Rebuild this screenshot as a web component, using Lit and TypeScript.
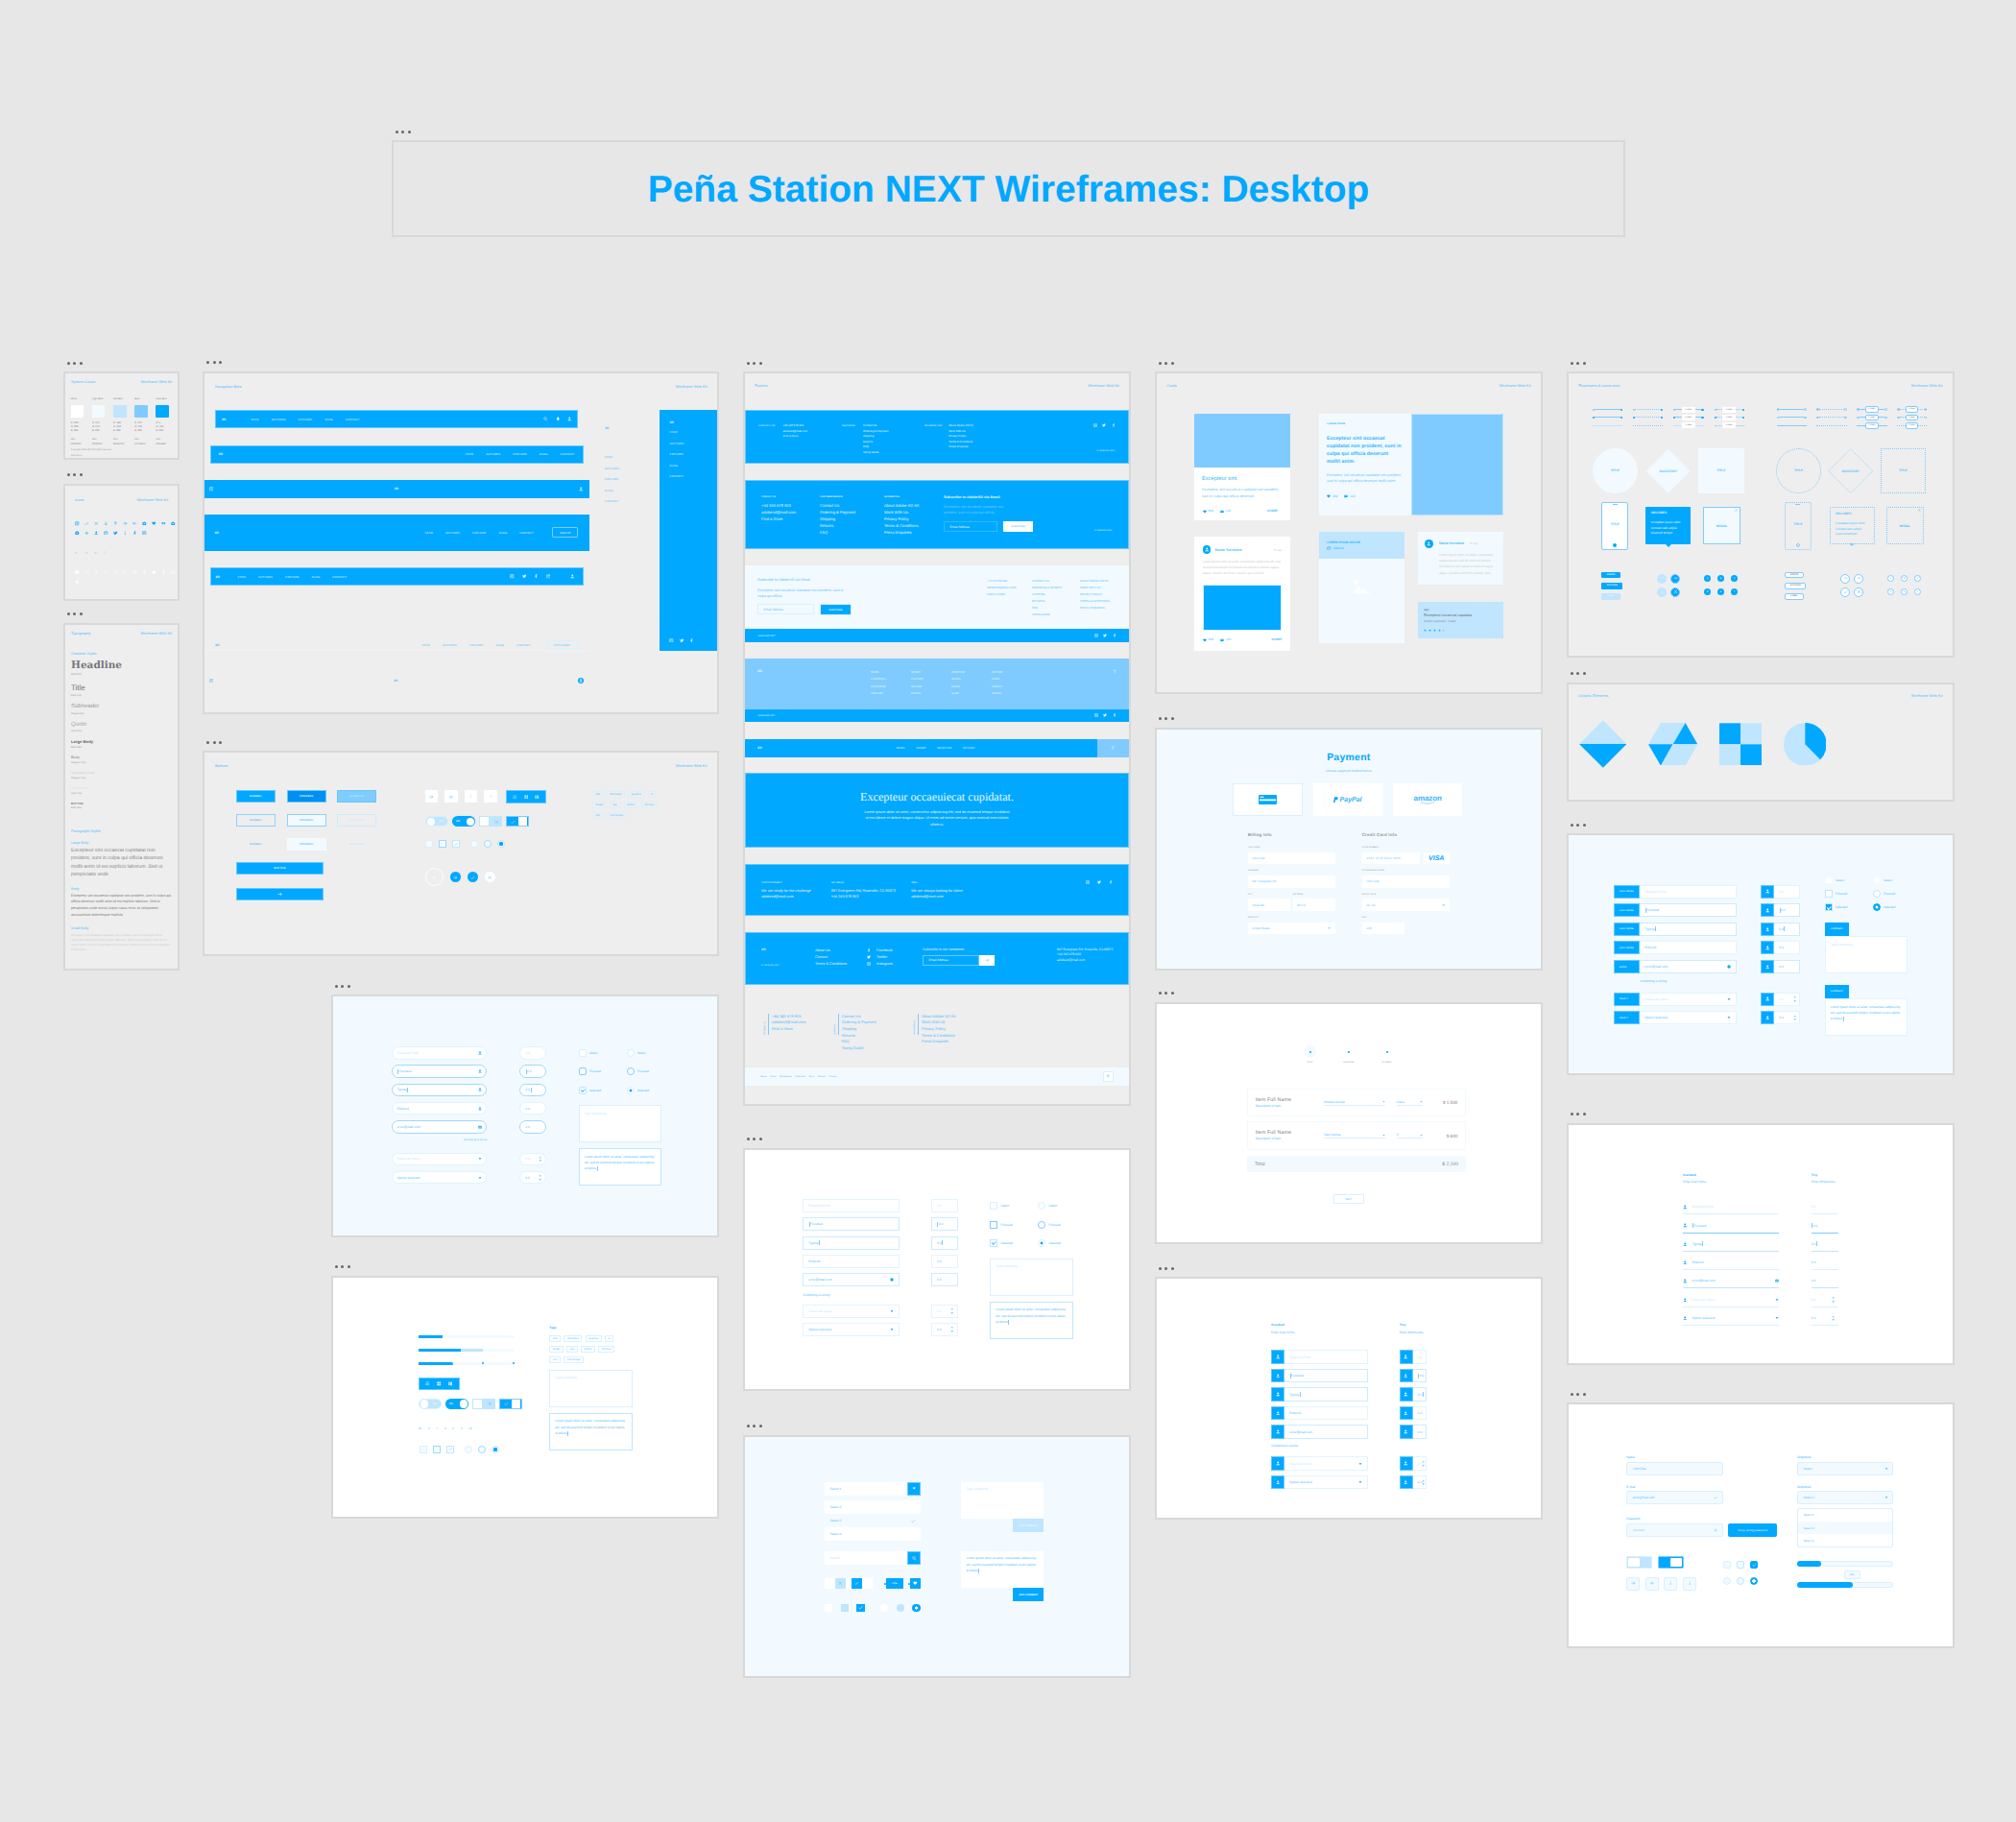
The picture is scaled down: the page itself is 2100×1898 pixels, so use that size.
import { LitElement, html, css, svg, nothing } from "lit";
import { customElement } from "lit/decorators.js";

const F = (d: string) => svg`<path d=${d} fill-rule="evenodd"/>`;
const S = (d: string) => svg`<path d=${d} fill="none" stroke="currentColor" stroke-width="2.6"/>`;
const ICONS: Record<string, any> = {
  user: F("M12 2a5 5 0 1 1 0 10 5 5 0 0 1 0-10zM4 19c0-5 16-5 16 0zM2 20.500h20V23H2z"),
  search: S("M10 3a7 7 0 1 1 0 14 7 7 0 0 1 0-14zM15 15l7 7"),
  bell: F("M12 2c4 0 6 3 6 7v5l3 4H3l3-4V9c0-4 2-7 6-7zM9.500 19.500h5a2.500 2.500 0 0 1-5 0z"),
  heart: F("M12 21 3 12C0 8 3 3 7 3c2 0 4 1 5 3 1-2 3-3 5-3 4 0 7 5 4 9z"),
  camera: F("M2 6h6l2-3h4l2 3h6v15H2zM12 9a4 4 0 1 0 0 8 4 4 0 0 0 0-8z"),
  comment: F("M2 4h20v14H8l-5 4v-4H2zM6 10v2h12v-2z"),
  tw: F("M23 5c-.8.4-1.700.6-2.600.7 1-.6 1.700-1.500 2-2.600-.9.5-1.900.9-2.900 1.100a4.600 4.600 0 0 0-7.800 4.200C8 8.200 4.600 6.400 2.300 3.600c-1.200 2.100-.6 4.800 1.400 6.100-.7 0-1.400-.2-2-.6 0 2.200 1.500 4.100 3.700 4.600-.7.2-1.400.2-2.100.1.600 1.900 2.300 3.200 4.300 3.200A9.200 9.200 0 0 1 1 18.900 13 13 0 0 0 21 7.500c.9-.6 1.600-1.400 2-2.500z"),
  fb: F("M14 23v-10h3.500l.5-4h-4V7c0-1 .5-2 2-2h2V1.500C17 1.300 16 1.200 15 1.200c-3 0-5 1.800-5 5V9H6.500v4H10v10z"),
  ig: S("M3 3h18v18H3zM12 7.500a4.500 4.500 0 1 1 0 9 4.500 4.500 0 0 1 0-9z"),
  globe: S("M12 2a10 10 0 1 1 0 20 10 10 0 0 1 0-20zM3 9c6 1 12-1 15-5M5 19c3-7 9-11 16-9"),
  gear: F("M10 1h4l.6 3 2.400 1 2.600-1.700 2.800 2.800L20 8.700l1 2.300 3 .6v3l-3 .6-1 2.400 1.700 2.600-2.800 2.800-2.600-1.700-2.300 1-.6 3h-4l-.6-3-2.400-1-2.600 1.700-2.800-2.800L4 17.600 3 15.300 0 14.700v-3l3-.6 1-2.400-1.700-2.600 2.800-2.800L7.700 5l2.300-1zM12 9a4 4 0 1 0 0 8 4 4 0 0 0 0-8z"),
  x: S("M4 4l16 16M20 4L4 20"),
  check: S("M3 13l6 6L21 6"),
  plus: S("M12 2v20M2 12h20"),
  up: S("M12 22V3M4 11l8-8 8 8"),
  down: S("M12 2v19M4 13l8 8 8-8"),
  right: S("M2 12h19M13 4l8 8-8 8"),
  left: S("M22 12H3M11 4l-8 8 8 8"),
  tri: F("M3 8h18l-9 10z"),
  triup: F("M3 16h18L12 6z"),
  menu: S("M2 5h20M2 12h20M2 19h20"),
  doc: S("M3 3h18v18H3zM7 9h10M7 14h10"),
  grid: F("M2 2h9v9H2zM13 2h9v9h-9zM2 13h9v9H2zM13 13h9v9h-9z"),
  cols: F("M2 2h5v20H2zM9.500 2h5v20h-5zM17 2h5v20h-5z"),
  quote: F("M2 6h9v7c0 3-2 5-5 6v-4c1 0 2-1 2-2H2zM13 6h9v7c0 3-2 5-5 6v-4c1 0 2-1 2-2h-6z"),
  dots: F("M10 3h4v4h-4zM10 10h4v4h-4zM10 17h4v4h-4z"),
  play: F("M8 5l11 7-11 7z"),
  mail: S("M2 5h20v14H2zM2 6l10 7 10-7"),
  mount: F("M1 20l7-10 4 5 3-3 8 8zM5 3a2.500 2.500 0 1 1 0 5 2.500 2.500 0 0 1 0-5z"),
  dot: F("M12 2a10 10 0 1 1 0 20 10 10 0 0 1 0-20z"),
  star: F("M12 2l3 7 7 .7-5.300 4.700 1.600 7.100L12 18l-6.300 3.500 1.600-7.100L2 9.700 9 9z"),
};
const ic = (n: string, c = "") =>
  html`<svg class="i ${c}" viewBox="0 0 24 24" aria-hidden="true">${ICONS[n]}</svg>`;

const art = (x: number, y: number, w: number, h: number, cls: string, body: unknown) => html`
  <section class="art" style="left:${x}px;top:${y - 14}px;width:${w}px">
    <div class="dots"><i></i><i></i><i></i></div>
    <div class="board ${cls}" style="height:${h}px">${body}</div>
  </section>`;

const hd = (t: string, c = "") =>
  html`<div class="hd ${c}"><span>${t}</span><span>Wireframe Web Kit</span></div>`;

const LINKS = ["FEED", "AUTHORS", "EXPLORE", "BLOG", "CONTACT"];
const links = () => html`<div class="links">${LINKS.map((l) => html`<span>${l}</span>`)}</div>`;
const stack = (rows: [string, string, number][]) =>
  rows.map(([t, c, m]) => html`<div class=${c} style="margin-top:${m}px">${t}</div>`);
const lines = (c: string, arr: string[]) => html`<div class=${c}>${arr.map((t) => html`<div>${t}</div>`)}</div>`;
const social = () => html`<div class="soc">${ic("ig")}${ic("tw")}${ic("fb")}</div>`;

/* ---------- system colours ---------- */
const SW = [
  ["White", "#ffffff", "255", "255", "255", "#FFFFFF"],
  ["Light Blue", "#f2faff", "242", "249", "255", "#F2F9FF"],
  ["Mid Blue", "#bfe5ff", "188", "228", "255", "#BCE4FF"],
  ["Blue", "#7fcbff", "127", "203", "255", "#7FCBFF"],
  ["Dark Blue", "#00a8ff", "0", "168", "255", "#00A8FF"],
];
const colors = () => html`${hd("System Colors")}
  <div class="swgrid">
    ${SW.map((s) => html`<div>
      <div class="swl">${s[0]}</div>
      <div class="sw" style="background:${s[1]}"></div>
      <div class="swv"><div>R: ${s[2]}</div><div>G: ${s[3]}</div><div>B: ${s[4]}</div></div>
      <div class="swh"><div>Hex</div><div>${s[5]}</div></div>
    </div>`)}
  </div>
  <div class="swc">Copyright 2016-2017 All rights reserved</div>
  <div class="swc swc2">Web kit 2.1</div>`;

/* ---------- icons ---------- */
const icons = () => html`${hd("Icons", "hd-i")}
  <div class="igrid ig1">${["doc","check","x","down","up","right","left","camera","heart","quote","camera","gear","plus","user","globe","tw","dots","fb","ig"].map((n) => ic(n))}</div>
  <div class="igrid ig2">${["left","right","left","dots"].map((n) => ic(n, "sm"))}</div>
  <div class="igrid ig3">${["comment","x","down","up","right","left","globe","user","tw","fb","mail","bell"].map((n) => ic(n))}</div>`;

/* ---------- typography ---------- */
const typo = () => html`${hd("Typography")}
  ${stack([
    ["Character Styles", "t-h", 17],
    ["Headline", "t-head", 3.5],
    ["Bold 24pt", "t-m", 2],
    ["Title", "t-title", 7],
    ["Bold 14pt", "t-m", 1],
    ["Subheader", "t-sub", 5],
    ["Regular 8pt", "t-m", 1.5],
    ["Quote", "t-q", 5.5],
    ["Italic 37pt", "t-m", 1],
    ["Large Body", "t-lb", 5.5],
    ["Bold 18pt", "t-m", 2],
    ["Body", "t-b", 5.8],
    ["Regular 14pt", "t-m", 1.8],
    ["Secondary Body", "t-sb", 5.5],
    ["Regular 14pt", "t-m", 1.5],
    ["Placeholder", "t-ph", 5.5],
    ["Italic 14pt", "t-m", 1],
    ["BUTTON", "t-btn", 6],
    ["Bold 12pt", "t-m", 0.5],
    ["Paragraph Styles", "t-h t-h2", 18.5],
    ["Large Body", "t-h", 8],
    ["Excepteur sint occaecat cupidatat non proident, sunt in culpa qui officia deserunt mollit anim id est explicio laborum. Sed ut perspiciatis unde", "p-l", 1.2],
    ["Body", "t-h", 7.8],
    ["Excepteur sint occaecat cupidatat non proident, sunt in culpa qui officia deserunt mollit anim id est explicio laborum. Sed ut perspiciatis unde omnis istpon natus error sit voluptatem accusantium doloremque explicia", "p-b", 1.2],
    ["Small Body", "t-h", 8.9],
    ["Excepteur sint occaecat cupidatat non proident, sunt in culpa qui officia deserunt mollit anim id est explicio laborum. Sed ut perspiciatis unde omnis istpon natus error sit voluptatem accusantium doloremque explicia laudantium. Dolore eum", "p-s", 2],
  ])}`;

/* ---------- navigation ---------- */
const nav = () => html`${hd("Navigation Bars", "hd-n")}
  <div class="nb">
    <div class="nl">
      <div class="bar b1"><b class="xd">XD</b>${links()}<div class="ics">${ic("search")}${ic("bell")}${ic("user")}</div></div>
      <div class="bar b2"><b class="xd">XD</b>${links()}</div>
      <div class="bar b3">${ic("doc")}<b class="xd">XD</b>${ic("user")}</div>
      <div class="bar b4"><b class="xd">XD</b>${links()}<span class="signup">SIGN UP</span></div>
      <div class="bar b5"><b class="xd">XD</b>${links()}<div class="ics">${ic("ig")}${ic("tw")}${ic("fb")}${ic("globe")}</div>${ic("user", "uu")}</div>
      <div class="bar b6"><b class="xd">XD</b>${links()}<span class="start">LET'S START</span></div>
      <div class="bar b7">${ic("doc")}<b class="xd">XD</b><span class="uc">${ic("user")}</span></div>
    </div>
    <div class="mn"><b class="xd">XD</b><div class="mnl">${LINKS.map((l) => html`<div>${l}</div>`)}</div></div>
    <div class="side"><b class="xd">XD</b><div class="sdl">${LINKS.map((l) => html`<div>${l}</div>`)}</div><div class="ics">${ic("ig")}${ic("tw")}${ic("fb")}</div></div>
  </div>`;

/* ---------- buttons ---------- */
const TAGS = ["web", "illustration", "graphics", "ui", "design", "app", "iphone", "interface", "icon", "web design"];
const tags = () => html`<div class="tags">${TAGS.map((t) => html`<span>${t}</span>`)}</div>`;
const seg = () => html`<div class="seg">${ic("menu")}${ic("grid")}${ic("cols")}</div>`;
const toggles = () => html`
  <div class="tg off"><i></i><span>OFF</span></div>
  <div class="tg on"><span>ON</span><i></i></div>
  <div class="tq off"><i></i>${ic("x")}</div>
  <div class="tq on">${ic("check")}<i></i></div>`;
const checks = () => html`<div class="chs">
    <i class="ck"></i><i class="ck fo"></i><i class="ck se">${ic("check")}</i>
    <i class="ra first"></i><i class="ra fo"></i><i class="ra se"></i>
  </div>`;
const btn = (t: string, c: string) => html`<span class="btn ${c}">${t}</span>`;
const buttons = () => html`${hd("Buttons", "hd-n hd-bt")}
  <div class="bb">
    <div class="bc1">
      <div class="bgrid">
        ${btn("NORMAL", "fill")}${btn("PRESSED", "fill pr")}${btn("DISABLED", "fill dis")}
        ${btn("NORMAL", "ol")}${btn("PRESSED", "ol pr")}${btn("DISABLED", "ol dis")}
        ${btn("NORMAL", "tn")}${btn("PRESSED", "tn pr")}${btn("DISABLED", "tn dis")}
      </div>
      <span class="btn fill wide">BUTTON</span>
      <span class="btn fill wide wide2">${ic("right")}</span>
    </div>
    <div class="bc2">
      <div class="brow r1">
        <span class="sq">${ic("right")}</span><span class="sq">${ic("left")}</span><span class="sq">${ic("dots", "tiny")}</span><span class="sq">${ic("dots", "tiny")}</span>${seg()}
      </div>
      <div class="brow r2">${toggles()}</div>
      ${checks()}
      <div class="brow r4">
        <span class="cbig">${ic("play")}</span><span class="cb">${ic("right")}</span><span class="cb">${ic("check")}</span><span class="cb w">${ic("x")}</span>
      </div>
    </div>
    ${tags()}
  </div>`;

/* ---------- footers ---------- */
const footers = () => {
  const c1 = ["+44 345 678 903", "adobexd@mail.com", "Find a Store"];
  const c2 = ["Contact Us", "Ordering & Payment", "Shipping", "Returns", "FAQ", "Sizing Guide"];
  const c3 = ["About Adobe XD Kit", "Work With Us", "Privacy Policy", "Terms & Conditions", "Press Enquiries"];
  const up = (s: string[]) => s.map((v) => v.toUpperCase());
  const news = [["NEWS", "CHANNELS", "OVERVIEW", "TIMELINE"], ["SPORT", "CULTURE", "NATURE", "BOOKS"], ["WEATHER", "AUTOS", "LOCAL", "SHOP"], ["FUTURE", "FOOD", "HEALTH", "TRAVEL"]];
  return html`${hd("Footers", "hd-f")}
  <div class="ff f1">
    <div class="g g1"><span>CONTACT US</span>${lines("ls", c1)}</div>
    <div class="g g2"><span>SERVICES</span>${lines("ls", c2)}</div>
    <div class="g"><span>INFORMATION</span>${lines("ls", c3)}</div>
    <div class="fr">${social()}<span class="cpy">© AdobeXD 2017</span></div>
  </div>
  <div class="ff f2">
    <div class="g k1"><span>CONTACT US</span>${lines("ls", c1)}</div>
    <div class="g k2"><span>CUSTOMER SERVICE</span>${lines("ls", c2.slice(0, 5))}</div>
    <div class="g k3"><span>INFORMATION</span>${lines("ls", c3)}</div>
    <div class="sb">
      <b>Subscribe to AdobeXD via Email</b>
      <p>Excepteur sint occaecat cupidatat non proident, sunt in culpa qui officia</p>
      <div class="sbr"><span class="in">Email Address</span><span class="go">SUBSCRIBE</span></div>
    </div>
    <span class="cpy">© AdobeXD 2017</span>
  </div>
  <div class="ff f3">
    <div class="sb">
      <b>Subscribe to AdobeXD via Email</b>
      <p>Excepteur sint occaecat cupidatat non proident, sunt in culpa qui officia</p>
      <div class="sbr"><span class="in">Email Address</span><span class="go">SUBSCRIBE</span></div>
    </div>
    ${lines("ls c1b", up(c1))}${lines("ls c2b", up(c2))}${lines("ls", up(c3))}
  </div>
  <div class="strip"><span>©AdobeXD 2017</span>${social()}</div>
  <div class="ff f4 ">
    <b class="xd">XD</b>
    ${news.map((n) => lines("ls nw", n))}
    ${ic("up")}
  </div>
  <div class="strip"><span>©AdobeXD 2017</span>${social()}</div>
  <div class="ff f5"><b class="xd">XD</b><div class="links">${news.map((n) => html`<span>${n[0]}</span>`)}</div><span class="upb">${ic("up")}</span></div>
  <div class="ff f6">
    <h3>Excepteur occaeuiecat cupidatat.</h3>
    <p>Lorem ipsum dolor sit amet, consectetur adipisicing elit, sed do eiusmod tempor incididunt ut ero labore et dolore magna aliqua. Ut enim ad minim veniam, quis nostrud exercitation ullamco.</p>
  </div>
  <div class="ff f7">
    <div class="ct w1"><span>START A PROJECT</span><div>We are ready for the challenge</div><div>adobexd@mail.com</div></div>
    <div class="ct w2"><span>SAY HELLO</span><div>697 Evergreen Rd, Roseville, CA 95673</div><div>+44 345 678 903</div></div>
    <div class="ct"><span>JOBS</span><div>We are always looking for talent</div><div>adobexd@mail.com</div></div>
    ${social()}
  </div>
  <div class="ff f8">
    <div class="n1"><b class="xd">XD</b><span class="cpy">© AdobeXD 2017</span></div>
    ${lines("ls n2", ["About Us", "Contact", "Terms & Conditions"])}
    <div class="n3">
      <div>${ic("fb")}Facebook</div><div>${ic("tw")}Twitter</div><div>${ic("ig")}Instagram</div>
    </div>
    <div class="n4"><span>Subscribe to our newsletter</span><div class="sbr"><span class="in">Email Address</span><span class="go">${ic("right")}</span></div></div>
    ${lines("ls n5", ["697 Evergreen Rd, Roseville, CA 95673", "+44 345 678 903", "adobexd@mail.com"])}
  </div>
  <div class="f9">
    <div class="lk w1"><span>CONTACT US</span>${lines("ls", c1)}</div>
    <div class="lk w2"><span>SERVICES</span>${lines("ls", c2)}</div>
    <div class="lk"><span>INFORMATION</span>${lines("ls", c3)}</div>
  </div>
  <div class="f10"><div class="fl">${["About", "Press", "Developers", "Channels", "Sport", "Culture", "Privacy"].map((t) => html`<span>${t}</span>`)}</div><span class="upc">${ic("up")}</span></div>`;
};

/* ---------- cards ---------- */
const stats = (share = true) => html`<div class="stat"><span>${ic("heart")}809</span><span>${ic("comment")}120</span>${share ? html`<b>SHARE</b>` : nothing}</div>`;
const cards = () => html`${hd("Cards", "hd-f")}
  <div class="cw">
    <div class="cc1">
      <article class="cd c-a">
        <div class="img"></div>
        <h4>Excepteur sint.</h4>
        <p>Excepteur sint occaecat cupidatat non proident, sunt in culpa qui officia deserunt</p>
        ${stats()}
      </article>
      <article class="cd c-b">
        <div class="who"><span class="av">${ic("user")}</span><b>Name Surname</b><em>5h ago</em></div>
        <p>Lorem ipsum dolor sit amet, consectetur adipiscing elit, sed do eiusmod tempor tincididunt ore labore et dolore magna aliqua. Ut enim ad minim veniam, quis nostrud</p>
        <div class="pic"></div>
        ${stats()}
      </article>
    </div>
    <div class="cc2">
      <div class="c-c">
        <div class="cct">
          <span class="eb">LOREM IPSUM</span>
          <h4>Excepteur sint occaecat cupidatat non proident, sunt in culpa qui officia deserunt mollit anim.</h4>
          <p>Excepteur sint occaecat cupidatat non proident, sunt in culpa qui officia deserunt mollit anim.</p>
          ${stats(false)}
        </div>
        <div class="img2"></div>
      </div>
      <div class="c-row">
        <article class="c-d">
          <div class="cdh"><b>LOREM IPSUM DOLOR</b><span>${ic("globe")}website</span></div>
          <div class="cdi">${ic("mount")}</div>
        </article>
        <div class="c-col">
          <article class="c-e">
            <span class="av">${ic("user")}</span>
            <div><div class="nm"><b>Name Surname</b><em>5h ago</em></div><p>Lorem ipsum dolor sit amet, consectetur adipiscing elit, sed do eiusmod tempor incididunt ut ero labore et dolore magna aliqua. Ut enim ad minim veniam, quis</p></div>
          </article>
          <article class="c-f">
            <span>App</span><b>Excepteur occaecat cupidata</b><em>Kristin Francisco, Travel</em>
            <div class="stars">${ic("star")}${ic("star")}${ic("star")}${ic("star")}${ic("star", "o")}</div>
          </article>
        </div>
      </div>
    </div>
  </div>`;

/* ---------- payment ---------- */
const pf = (l: string, t: string, c = "", tail: unknown = nothing) => html`<div class="pf ${c}"><label>${l}</label><div class="pi">${t}${tail}</div></div>`;
const payment = () => html`
  <h2 class="pt">Payment</h2>
  <div class="ps">Choose payment method below</div>
  <div class="opts">
    <div class="opt sel"><svg class="cardi" viewBox="0 0 38 20"><rect width="38" height="20" rx="2" fill="#00a8ff"/><rect x="2" y="9" width="34" height="3.500" fill="#fff"/><rect x="3" y="3" width="8" height="3" fill="#bfe5ff"/></svg></div>
    <div class="opt pp"><svg class="ppi" viewBox="0 0 10 12"><path d="M2 0h5c2 0 3 2 2 4S7 6 5 6H4l-1 6H0z" fill="#00a8ff"/></svg><i>PayPal</i></div>
    <div class="opt az"><span>amazon</span><svg class="smile" viewBox="0 0 30 4"><path d="M5 0c6 4 14 4 20 0" fill="none" stroke="#7fcbff" stroke-width="1"/></svg></div>
  </div>
  <div class="pcols">
    <div class="pcol">
      <h5>Billing Info</h5>
      ${pf("FULL NAME", "John Doe")}
      ${pf("ADDRESS", "697 Evergreen Rd.")}
      <div class="prow">${pf("CITY", "Roseville", "half")}${pf("ZIP CODE", "95673", "half")}</div>
      ${pf("COUNTRY", "United States", "", ic("tri"))}
    </div>
    <div class="pcol">
      <h5>Credit Card Info</h5>
      <div class="pf"><label>CARD NUMBER</label><div class="prow p2"><div class="pi cn">1234 5678 3456 2456</div><div class="pi visa">VISA</div></div></div>
      ${pf("CARDHOLDER NAME", "John Doe")}
      ${pf("EXPIRY DATE", "06 / 21", "", ic("tri"))}
      ${pf("CVV", "123", "half")}
    </div>
  </div>`;

/* ---------- flowcharts ---------- */
const cline = (lbl: boolean, dsh: boolean, ends: number) => html`<div class="cl ${dsh ? "da" : ""} e${ends}">
    <i class="e"></i><i class="li"></i>${lbl ? html`<span>LABEL</span><i class="li"></i>` : nothing}<i class="e r"></i>
  </div>`;
const lg = (lbl: boolean, dsh: boolean) => html`<div class="lg">${[0, 1, 2].map((e) => cline(lbl, dsh, e))}</div>`;
const side = (c: string) => html`<div class="fside ${c}">
    <div class="lrow">${lg(false, false)}${lg(false, true)}${lg(true, false)}${lg(true, true)}</div>
    <div class="srow">
      <div class="sh ci">TITLE</div>
      <svg class="dia" viewBox="0 0 48 48"><polygon points="24,.6 47.4,24 24,47.400 .6,24"/><text x="24" y="25.200" text-anchor="middle">SUCCESS?</text></svg>
      <div class="sh sq2">TITLE</div>
    </div>
    <div class="prw">
      <div class="phn"><i class="sp"></i>TITLE<i class="hb"></i></div>
      <div class="call"><b>INCLUDES</b><span>Excepteur ipsum dolor</span><span>Contate labo adipisi</span><span>Eiusmod tempor</span></div>
      <div class="modal">MODAL${ic("x")}</div>
    </div>
    <div class="trw">
      <div class="pills"><span>ERROR</span><span class="l">SUCCESS</span><span>LABEL</span></div>
      <div class="yn"><span class="a">YES</span><span class="b">NO</span><span class="a">${ic("check")}</span><span class="b">${ic("x")}</span></div>
      <div class="nums">${["A", "B", "C", "D", "E", "F"].map((t) => html`<span>${t}</span>`)}</div>
    </div>
  </div>`;
const flow = () => html`${hd("Flowcharts & connectors", "hd-f")}<div class="fbody">${side("sol")}${side("dsh")}</div>`;

/* ---------- graphic ---------- */
const graphic = () => html`${hd("Graphic Elements", "hd-f")}
  <div class="gfx">
    <svg class="g1x" viewBox="0 0 50 50"><polygon points="25,0 50,25 0,25" fill="#bfe5ff"/><polygon points="0,25 50,25 25,50" fill="#00a8ff"/></svg>
    <svg class="g2x" viewBox="0 0 154 134"><polygon points="0,67 39,0 116,0 77,67" fill="#bfe5ff"/><polygon points="77,67 116,0 154,67" fill="#00a8ff"/><polygon points="0,67 77,67 39,134" fill="#00a8ff"/><polygon points="77,67 154,67 116,134 39,134" fill="#bfe5ff"/></svg>
    <svg class="g3x" viewBox="0 0 2 2"><rect width="1" height="1" fill="#00a8ff"/><rect x="1" width="1" height="1" fill="#bfe5ff"/><rect y="1" width="1" height="1" fill="#bfe5ff"/><rect x="1" y="1" width="1" height="1" fill="#00a8ff"/></svg>
    <svg class="g4x" viewBox="0 0 134 134"><circle cx="67" cy="67" r="67" fill="#bfe5ff"/><path d="M67 67V0A67 67 0 0 1 114.400 114.400z" fill="#00a8ff"/></svg>
  </div>`;

/* ---------- forms ---------- */
type V = "n" | "p" | "k" | "s" | "l";
const FIELDS: [string, string][] = [["Required Field", "ph"], ["Focused", "fo"], ["Typing", "ty"], ["Entered", "en"], ["error@mail.com", "er"]];
const fld = (v: V, t: string, st: string, sel: boolean, small: boolean) => {
  const lead =
    v === "k" && !small ? html`<span class="lb">${st === "er" ? "EMAIL" : sel ? "WHAT?" : "FULL NAME"}</span>`
    : v === "k" || v === "s" ? html`<span class="ib">${ic("user")}</span>`
    : v === "l" && !small ? ic("user", "lead")
    : nothing;
  const trail =
    small && sel ? html`<span class="spin">${ic("triup")}${ic("tri")}</span>`
    : sel ? ic("tri", "tr")
    : small ? nothing
    : v === "n" ? ic(st === "er" ? "camera" : "user", "tr")
    : st === "er" && v !== "s" ? ic(v === "l" ? "camera" : "dot", "tr")
    : nothing;
  return html`<div class="f ${st}">${lead}<span class="tx">${st === "fo" ? html`<i class="car"></i>` : nothing}${t}${st === "ty" ? html`<i class="car"></i>` : nothing}</span>${trail}</div>`;
};
const ta = (t: string, fo: boolean) => html`<div class="ta ${fo ? "tf" : "tp"}">${t}${fo ? html`<i class="car"></i>` : nothing}</div>`;
const LOREM = "Lorem ipsum dolor sit amet, consectetur adipisicing elit, sed do eiusmod tempor incididunt ut ero labore et dolore";
const chkg = () => html`<div class="cg">
    ${["Select", "Focused", "Selected"].map((t, i) => html`
      <div class="ci2 s${i}"><i class="ck"></i><span>${t}</span></div>
      <div class="ci2 s${i}"><i class="ra"></i><span>${t}</span></div>`)}
  </div>`;
const form = (v: V, heads: boolean, third: unknown) => {
  const note = (on: boolean) => (v === "l" ? nothing : html`<div class="note">${on ? "Something is wrong" : ""}</div>`);
  return html`<div class="fm v-${v}">
    <div class="c1">
      ${heads ? html`<div class="fh"><b>Standard</b><span>Enter main forms</span></div>` : nothing}
      <div class="fs">
        ${FIELDS.map(([t, s]) => fld(v, t, s, false, false))}
        ${note(true)}
        ${fld(v, "Select an option", "ph", true, false)}${fld(v, "Option selected", "en", true, false)}
      </div>
    </div>
    <div class="c2">
      ${heads ? html`<div class="fh"><b>Tiny</b><span>Enter dimensions</span></div>` : nothing}
      <div class="fs">
        ${FIELDS.map(([, s]) => fld(v, "0.0", s, false, true))}
        ${note(false)}
        ${fld(v, "0.0", "ph", true, true)}${fld(v, "0.0", "en", true, true)}
      </div>
    </div>
    ${third}
  </div>`;
};
const third = () => html`<div class="c3">${chkg()}${ta("Type something ...", false)}${ta(LOREM, true)}</div>`;
const thirdK = () => html`<div class="c3">${chkg()}
    <span class="lbb">COMMENT</span>${ta("Type something ...", false)}
    <span class="lbb second">COMMENT</span>${ta(LOREM, true)}
  </div>`;

/* ---------- controls ---------- */
const controls = () => html`<div class="oo">
    <div class="o1">
      <div class="pg"><i class="a25"></i></div>
      <div class="pg"><i class="mid"></i><i class="a44"></i></div>
      <div class="pg dotsb"><i class="a34"></i><u class="k"></u><u class="d1"></u><u class="d2"></u></div>
      ${seg()}
      <div class="brow r2 o-t">${toggles()}</div>
      <div class="pager">${ic("left")}<i></i><i></i><i></i><i></i><i></i>${ic("right")}</div>
      ${checks()}
    </div>
    <div class="o2">
      <b class="ttl">Tags</b>
      ${tags()}
      ${ta("Type something ...", false)}
      ${ta(LOREM, true)}
    </div>
  </div>`;

const selectBoard = () => html`<div class="qq">
    <div class="q1">
      <div class="qf"><span>Select 1</span><b class="qb">${ic("tri")}</b></div>
      <div class="ql"><div>Select 2</div><div class="a">Select 3${ic("check")}</div><div>Select 4</div></div>
      <div class="qf qph"><span>Search ...</span><b class="qb">${ic("search")}</b></div>
      <div class="qc">
        <div class="qt"><i class="mx">${ic("x")}</i><i class="bl">${ic("check")}</i></div>
        <span class="like">LIKE</span><span class="hrt">${ic("heart")}</span>
      </div>
      <div class="qr"><i class="s w"></i><i class="s m"></i><i class="s b">${ic("check")}</i><i class="r w"></i><i class="r m"></i><i class="r b"></i></div>
    </div>
    <div class="q2">
      <div class="qa qph">Type something ...</div><span class="qsub dis">ADD COMMENT</span>
      <div class="qa sec">${LOREM}<i class="car"></i></div><span class="qsub">ADD COMMENT</span>
    </div>
  </div>`;

const checkout = () => html`
  <div class="stp">
    <div class="st"><i class="big"><u></u></i><span>CART</span></div>
    <div class="st"><i><u></u></i><span>SHIPPING</span></div>
    <div class="st"><i><u></u></i><span>PAYMENT</span></div>
  </div>
  <div class="rows">
    <div class="rw">
      <div><h6>Item Full Name</h6><span>Description of item</span></div>
      <div class="us">Choose license${ic("tri")}</div><div class="us">Users${ic("tri")}</div><b>$ 1,500</b>
    </div>
    <div class="rw">
      <div><h6>Item Full Name</h6><span>Description of item</span></div>
      <div class="us">New license${ic("tri")}</div><div class="us">5${ic("tri")}</div><b>$ 600</b>
    </div>
    <div class="tot"><b>Total</b><b>$ 2,100</b></div>
  </div>
  <span class="nxt">NEXT</span>`;

const mform = () => html`<div class="mm">
    <div class="mc1">
      <label>Name</label><div class="mi">John Doe</div>
      <label class="l2">E-mail</label><div class="mi">error@mail.com${ic("check")}</div>
      <label class="l3">Password</label>
      <div class="mp"><div class="mi">•••••••••••${ic("x")}</div><span class="tip">Sorry, wrong password</span></div>
      <div class="mlow">
        <div>
          <div class="mt"><div class="tb off"><i></i></div><div class="tb on"><i></i></div></div>
          <div class="mctl"><span>${ic("right")}</span><span>${ic("left")}</span><span>${ic("dots")}</span><span>${ic("dots")}</span></div>
        </div>
        <div class="mck">
          <i class="c"></i><i class="c foc"></i><i class="c on">${ic("check")}</i>
          <i class="r"></i><i class="r foc"></i><i class="r on"></i>
        </div>
      </div>
    </div>
    <div class="mc2">
      <label>Dropdown</label><div class="mi">Select${ic("tri")}</div>
      <label class="l2">Dropdown</label><div class="mi">Select 1${ic("tri")}</div>
      <div class="ml"><div>Select 2</div><div class="a">Select 3</div><div>Select 4</div></div>
      <div class="mb"><i class="p25"></i></div>
      <div class="mb mb2"><i class="p58"></i><span class="pct">60%</span></div>
    </div>
  </div>`;

@customElement("app-root")
export class AppRoot extends LitElement {
  static styles = css`
    * { box-sizing: border-box; margin: 0; }
    :host { display: block; position: relative; width: 2100px; height: 1898px; overflow: hidden; background: #e7e7e7;
      font-family: "Liberation Sans", Arial, sans-serif; text-rendering: geometricPrecision; color: #4dbdff; }
    .art { position: absolute; }
    .dots { height: 14px; display: flex; gap: 3.8px; padding: 3.500px 0 0 3.500px; }
    .dots i { width: 3px; height: 3px; border-radius: 50%; background: #666; }
    .board { border: 2px solid #d8d8d8; background: #eee; overflow: hidden; }
    .lt { background: #f2faff; } .wh { background: #fff; }
    .title { background: #e7e7e7; display: flex; align-items: center; justify-content: center; font-size: 39px; font-weight: 700; color: #00a8ff; padding-top: 2px; }
    .hd { display: flex; justify-content: space-between; font-size: 3.900px; line-height: 5px; color: #4dbdff; padding: 6px 6px 0; }
    .hd-f { padding: 9.500px 10.300px 0; }
    .i { display: block; flex: none; width: 4.500px; height: 4.500px; fill: currentColor; }
    .i.sm { width: 3.500px; height: 3.500px; } .i.tiny { width: 3px; height: 3px; }
    .xd { font-size: 3.200px; font-weight: 700; }
    .links { display: flex; gap: 13px; font-size: 2.800px; letter-spacing: .2px; }

    /* colours */
    .swgrid { display: grid; grid-template-columns: repeat(5, 22.200px); padding: 13.600px 0 0 5.700px; font-size: 2.600px; color: #888; }
    .swl { line-height: 4px; white-space: nowrap; }
    .sw { width: 13.500px; height: 13.500px; border-radius: 1px; margin-top: 4.400px; }
    .swv { margin-top: 3.500px; line-height: 4.200px; } .swh { margin-top: 4.400px; line-height: 4.800px; }
    .swc { font-size: 2.400px; color: #999; line-height: 4px; padding: 1.400px 0 0 5.700px; white-space: nowrap; } .swc2 { padding-top: 2px; }

    /* icons */
    .hd-i { padding: 12.500px 10px 0; }
    .igrid { display: flex; flex-wrap: wrap; gap: 5.300px 5.500px; padding: 0 0 0 10.300px; color: #00a8ff; }
    .ig1 { margin-top: 20px; } .ig2 { margin-top: 17px; color: #7fcbff; } .ig2 .i { margin-right: 1px; } .ig3 { margin-top: 16px; color: #fff; }

    /* type */
    :is(.t-h,.t-m,.t-head,.t-title,.t-sub,.t-q,.t-lb,.t-b,.t-sb,.t-ph,.t-btn,.p-l,.p-b,.p-s) { padding: 0 6px; color: #777; white-space: nowrap; }
    .t-h { font-size: 3.600px; line-height: 5px; color: #4dbdff; }
    .t-h2 { font-size: 4px; }
    .t-head { font: 700 10.500px/12px "DejaVu Serif", serif; color: #777; padding-right: 0; }
    .t-m { font-size: 2.600px; line-height: 4px; color: #999; }
    .t-title { font-size: 8px; line-height: 10px; }
    .t-sub { font-size: 6px; line-height: 8px; color: #999; }
    .t-q { font-size: 6px; line-height: 8px; font-style: italic; color: #aaa; }
    .t-lb { font-size: 4.200px; line-height: 5px; font-weight: 700; color: #666; }
    .t-b { font-size: 3.900px; line-height: 5px; color: #888; }
    .t-sb { font-size: 3.300px; line-height: 5px; color: #ccc; }
    .t-ph { font-size: 3.300px; line-height: 5px; font-style: italic; color: #ddd; }
    .t-btn { font-size: 3px; line-height: 5px; font-weight: 700; }
    .p-l { white-space: normal; font-size: 5.200px; line-height: 8.500px; color: #888; }
    .p-b { white-space: normal; font-size: 3.650px; line-height: 6.600px; color: #777; }
    .p-s { white-space: normal; font-size: 3px; line-height: 5px; color: #ccc; }

    /* nav */
    .hd-n { padding: 11px 10.600px 0; }
    .nb { display: flex; margin-top: 22.500px; }
    .nl { width: 400.600px; flex: none; }
    .bar { display: flex; align-items: center; height: 19px; background: #00a8ff; color: #eaf8ff; }
    .ics { display: flex; gap: 8px; }
    .b1 { margin-left: 10.600px; width: 378.500px; padding: 0 5.500px 0 6px; border: 1px solid #66c8ff; }
    .b1 .links { margin-left: 26px; } .b1 .ics { margin-left: auto; }
    .b2 { margin: 17.500px 0 0 5.200px; width: 389.400px; padding: 0 8.700px 0 8px; justify-content: space-between; border: 1px solid #66c8ff; }
    .b3 { margin-top: 17.400px; padding: 0 6px 0 4.500px; justify-content: space-between; }
    .b4 { margin-top: 16.700px; height: 38px; padding: 0 11.500px 0 10px; }
    .b4 .links { margin-left: auto; }
    .signup { margin-left: 19px; width: 27.500px; height: 11px; border: 1px solid #7fcbff; border-radius: 1px; font-size: 2.800px; display: flex; align-items: center; justify-content: center; }
    .b5 { margin: 17.600px 0 0 5.200px; width: 389.400px; padding: 0 8px 0 4.800px; border: 1px solid #66c8ff; }
    .b5 .links { margin-left: 19px; } .b5 .ics { margin-left: auto; } .uu { margin-left: 21px; }
    .b6 { margin-top: 56.200px; height: 12px; padding: 0 12.200px 0 10.600px; background: none; color: #4dbdff; border-bottom: 1px solid #f2f2f2; }
    .b6 .links { margin-left: auto; }
    .start { margin-left: 15.700px; width: 33.200px; height: 10px; border: 1px solid #d9f0ff; font-size: 2.800px; display: flex; align-items: center; justify-content: center; }
    .b7 { margin-top: 24.600px; height: 12px; padding: 0 6px 0 4.500px; justify-content: space-between; background: none; color: #4dbdff; }
    .uc { width: 6px; height: 6px; background: #00a8ff; color: #fff; border-radius: 50%; display: flex; align-items: center; justify-content: center; }
    .uc .i { width: 4px; height: 4px; }
    .mn { width: 73px; flex: none; padding: 12.500px 0 0 16px; color: #4dbdff; line-height: 5px; }
    .mnl { margin-top: 22.700px; font-size: 2.800px; line-height: 11.500px; letter-spacing: .2px; }
    .side { width: 60px; height: 251px; background: #00a8ff; color: #eaf8ff; padding: 10.500px 0 9px 10.500px; display: flex; flex-direction: column; line-height: 5px; }
    .sdl { margin-top: 2.500px; font-size: 2.800px; line-height: 11.500px; letter-spacing: .2px; }
    .side .ics { margin-top: auto; gap: 6px; }

    /* buttons */
    .hd-bt { padding-top: 10.500px; }
    .bb { display: flex; padding: 23px 0 0 32.600px; }
    .bc1 { width: 197px; flex: none; display: flex; flex-direction: column; align-items: flex-start; }
    .bgrid { display: grid; grid-template-columns: repeat(3, 41.200px); gap: 12px 11.400px; }
    .btn { height: 13px; display: flex; align-items: center; justify-content: center; font-size: 2.700px; font-weight: 700; letter-spacing: .2px; }
    .fill { background: #00a8ff; color: #fff; border: 1px solid #66c8ff; }
    .fill.pr { background: #0090f0; } .fill.dis { background: #80ccff; color: #bfe5ff; }
    .ol { border: 1px solid #8fd2ff; color: #4dbdff; }
    .ol.pr { background: #f2faff; } .ol.dis { border-color: #cfe9fb; color: #cfe9fb; }
    .tn { color: #4dbdff; } .tn.pr { background: #f2faff; } .tn.dis { color: #bfe5ff; }
    .wide { width: 91px; margin-top: 12.300px; } .wide2 { margin-top: 14px; } .wide .i { width: 5px; height: 5px; }
    .bc2 { width: 173.800px; flex: none; }
    .brow { display: flex; align-items: center; }
    .r1 { gap: 7px; } .sq { width: 13.500px; height: 13px; background: #fff; border-radius: 1px; display: flex; align-items: center; justify-content: center; color: #4dbdff; }
    .seg { width: 42.500px; height: 14.500px; background: #00a8ff; color: #bfe5ff; display: flex; align-items: center; justify-content: space-around; border: 1px solid #66c8ff; padding: 0 3px; }
    .r1 .seg { margin-left: 1.700px; }
    .r2 { margin-top: 13.400px; gap: 3.500px; }
    .tg { width: 24.500px; height: 11px; border-radius: 6px; display: flex; align-items: center; justify-content: space-between; padding: 0 1px; font-size: 2.600px; font-weight: 700; }
    .tg i { width: 8.500px; height: 8.500px; background: #fff; border-radius: 50%; }
    .tg.off { background: #bfe5ff; color: #e6f6ff; border: 1px solid #d9f0ff; } .tg.off span { margin-right: 3px; }
    .tg.on { background: #00a8ff; color: #e6f6ff; } .tg.on span { margin-left: 3px; }
    .tq { width: 24.500px; height: 11px; display: flex; align-items: center; justify-content: space-between; padding: 1px 3.500px 1px 1px; }
    .tq i { width: 9px; height: 9px; background: #fff; }
    .tq.off { background: #bfe5ff; color: #4dbdff; }
    .tq.on { background: #00a8ff; color: #fff; padding: 1px 1px 1px 4px; border: 1px solid #7fcbff; }
    .chs { display: flex; align-items: center; gap: 6px; margin-top: 13.400px; height: 8.500px; }
    .ck, .ra { display: flex; align-items: center; justify-content: center; width: 8px; height: 8px; border: 1px solid #d9f0ff; background: #f4fbff; color: #4dbdff; flex: none; }
    .ck .i { width: 4.500px; height: 4.500px; }
    .ra { border-radius: 50%; } .ra.first { margin-left: 5.400px; }
    .ck.fo, .ra.fo { border: 1px solid #9fd8ff; } .ck.se { border: 1px solid #bfe5ff; background: #fff; }
    .ra.se { border: 1px solid #bfe5ff; background: radial-gradient(circle, #00a8ff 0 2px, #fff 2.400px); }
    .r4 { margin-top: 21px; gap: 7px; height: 19px; }
    .cbig { width: 19px; height: 19px; border: 1px solid #fff; border-radius: 50%; display: flex; align-items: center; justify-content: center; color: #fff; margin-right: -.400px; }
    .cb { width: 11px; height: 11px; border-radius: 50%; background: #00a8ff; color: #fff; display: flex; align-items: center; justify-content: center; }
    .cb.w { background: #fff; color: #4dbdff; }
    .tags { display: flex; flex-wrap: wrap; align-content: flex-start; gap: 4px 3.400px; width: 72px; padding-top: 1px; }
    .tags span { height: 7px; padding: 0 2.400px; border: 1px solid #d9f0ff; font-size: 2.700px; line-height: 5px; color: #4dbdff; }

    /* footers */
    .ff { display: flex; background: #00a8ff; color: #eaf8ff; position: relative; }
    .ls { font-size: 2.900px; line-height: 5.600px; }
    .g { display: flex; font-size: 2.700px; line-height: 5.600px; }
    .soc { display: flex; gap: 5.500px; } .soc .i { width: 4px; height: 4px; }
    .cpy { font-size: 2.300px; letter-spacing: .1px; white-space: nowrap; }
    .f1 { margin-top: 23.800px; height: 55.400px; padding: 12.700px 13.300px 0 13px; border: 1px solid #66c8ff; }
    .f1 .g { width: 87px; } .f1 .g > span { width: 25.500px; flex: none; }
    .f1 .g2 { width: 85.700px; } .f1 .g2 > span { width: 22px; }
    .fr { margin-left: auto; display: flex; flex-direction: column; align-items: flex-end; height: 30px; justify-content: space-between; }
    .f2 { margin-top: 17.300px; height: 71.700px; padding: 15px 16px 0; border: 1px solid #66c8ff; }
    .f2 .g { flex-direction: column; font-size: 2.300px; font-weight: 700; line-height: 5px; }
    .f2 .g .ls { font-size: 4.100px; line-height: 6.900px; font-weight: 400; margin-top: 3px; }
    .k1 { width: 61px; } .k2 { width: 67px; } .k3 { width: 62px; }
    .sb { width: 93px; }
    .sb b { font-size: 3.800px; line-height: 5px; display: block; white-space: nowrap; }
    .sb p { font-size: 3.700px; line-height: 6px; color: #6fd0ff; margin-top: 4.500px; width: 72px; }
    .sbr { display: flex; margin-top: 6px; }
    .in { height: 11px; width: 58.700px; border: 1px solid #33b9ff; font-size: 3.200px; display: flex; align-items: center; padding-left: 5.500px; white-space: nowrap; }
    .go { height: 11px; background: #fff; color: #4dbdff; font-size: 2.500px; display: flex; align-items: center; justify-content: center; }
    .sb .go { width: 33px; margin-left: 6px; }
    .f2 > .cpy { margin: 36px 0 0 auto; }
    .f3 { margin-top: 17px; height: 66.600px; background: #f2faff; color: #4dbdff; padding: 13px 0 0 13px; }
    .f3 .sb { width: 239px; } .f3 .sb b { font-weight: 400; } .f3 .sb p { width: 97px; color: #66c4ff; margin-top: 5.200px; }
    .f3 .in { background: #f2faff; border-color: #d9f0ff; } .f3 .sbr { margin-top: 5.300px; }
    .f3 .go { background: #00a8ff; color: #fff; border: 1px solid #d9f0ff; height: 12px; }
    .f3 .ls { font-size: 2.800px; line-height: 7px; white-space: nowrap; }
    .c1b { width: 47px; } .c2b { width: 50px; }
    .strip { height: 13.700px; background: #00a8ff; color: #eaf8ff; display: flex; align-items: center; justify-content: space-between; padding: 0 13.300px; font-size: 2.400px; }
    .f4 { margin-top: 17.400px; height: 52.300px; background: #7fcbff; padding: 11px 0 0 13px; }
    .f4 > .xd { width: 118px; }
    .f4 .nw { width: 42px; font-size: 2.800px; line-height: 7.100px; color: #eef9ff; }
    .f4 > .i { margin-left: 84px; color: #eef9ff; }
    .f5 { margin-top: 17.300px; height: 19px; align-items: center; padding-left: 13px; }
    .f5 .links { gap: 11.500px; margin-left: 140px; }
    .upb { margin-left: auto; width: 33.300px; height: 19px; background: #7fcbff; color: #eef9ff; display: flex; align-items: center; justify-content: center; }
    .f6 { margin-top: 16.800px; height: 78px; flex-direction: column; align-items: center; border: 1px solid #66c8ff; }
    .f6 h3 { font: 400 12.200px/14px "Liberation Serif", serif; margin-top: 16.500px; white-space: nowrap; }
    .f6 p { font-size: 3.800px; line-height: 6.500px; width: 152px; text-align: center; margin-top: 5.800px; }
    .f7 { margin-top: 16.600px; height: 54.400px; padding: 16px 16px 0; border: 1px solid #66c8ff; }
    .ct span { font-size: 2.400px; line-height: 5px; display: block; }
    .ct div { font-size: 3.800px; line-height: 6.800px; white-space: nowrap; } .ct span + div { margin-top: 2.600px; }
    .w1 { width: 72.700px; } .w2 { width: 83.300px; }
    .f7 .soc { margin-left: auto; gap: 8px; }
    .f8 { margin-top: 16.600px; height: 55px; padding: 14.500px 0 0 16px; border: 1px solid #66c8ff; }
    .n1 { width: 56px; display: flex; flex-direction: column; gap: 12px; line-height: 5px; }
    .n2 { width: 54px; font-size: 3.800px; line-height: 7px; }
    .n3 { width: 58px; font-size: 3.800px; line-height: 7px; }
    .n3 div { display: flex; align-items: center; gap: 6px; } .n3 .i { width: 4px; height: 4px; }
    .n4 { width: 140px; font-size: 3.600px; line-height: 5px; }
    .n4 .sbr { margin-top: 3px; } .n4 .go { width: 16.600px; } .n4 .in { border-color: #66c8ff; }
    .n5 { font-size: 3.300px; line-height: 5.700px; white-space: nowrap; }
    .f9 { display: flex; height: 86px; padding: 29.500px 0 0 18px; color: #4dbdff; }
    .lk { display: flex; gap: 3px; }
    .lk > span { writing-mode: vertical-rl; transform: rotate(180deg); font-size: 2.200px; line-height: 6px; height: 22px; white-space: nowrap; border-left: 1px solid #7fcbff; }
    .lk .ls { font-size: 4px; line-height: 6.700px; white-space: nowrap; }
    .f10 { height: 19.400px; background: #f2faff; display: flex; align-items: center; justify-content: space-between; padding: 0 16px; }
    .fl { display: flex; gap: 3.500px; font-size: 2.500px; }
    .upc { width: 11.300px; height: 11.300px; background: #fff; border: 1px solid #d9f0ff; color: #4dbdff; display: flex; align-items: center; justify-content: center; }

    /* cards */
    .cw { display: flex; padding: 27.900px 0 0 39px; }
    .cc1 { width: 100px; flex: none; }
    .cd { background: #fff; }
    .c-a { height: 111px; }
    .img { height: 56px; background: #7fcbff; }
    .c-a h4 { font-size: 5.500px; line-height: 7px; font-weight: 400; color: #33b4ff; padding: 8.200px 8px 0; letter-spacing: .1px; }
    .c-a p { font-size: 3.800px; line-height: 7.100px; padding: 4.500px 6px 0 8px; color: #66c4ff; white-space: nowrap; overflow: hidden; height: 18.700px; white-space: normal; }
    .stat { display: flex; align-items: center; gap: 7px; font-size: 3.200px; line-height: 5px; color: #4dbdff; }
    .stat span { display: flex; align-items: center; gap: 2px; } .stat .i { color: #00a8ff; width: 4px; height: 4px; }
    .stat b { margin-left: auto; font-weight: 700; }
    .c-a .stat { padding: 8.800px 13px 0 8.500px; }
    .c-b { margin-top: 17px; height: 119px; padding: 8.700px 8.700px 0; }
    .who { display: flex; align-items: center; height: 9px; gap: 4px; }
    .av { width: 8.800px; height: 8.800px; border-radius: 50%; background: #00a8ff; color: #fff; display: flex; align-items: center; justify-content: center; flex: none; }
    .who b { font-size: 3.700px; color: #4dbdff; letter-spacing: .1px; } .who em { margin-left: auto; font-style: normal; font-size: 2.800px; color: #ccc; }
    .c-b p { font-size: 3.100px; line-height: 6px; color: #ccc; margin-top: 5.400px; }
    .pic { height: 48px; background: #00a8ff; margin-top: 8.400px; border: 1px solid #d9f0ff; }
    .c-b .stat { margin-top: 7.500px; }
    .cc2 { width: 192px; flex: none; margin-left: 30px; }
    .c-c { display: flex; height: 106px; }
    .cct { width: 95.600px; flex: none; background: #f2faff; padding: 7.800px 8px 0; }
    .eb { font-size: 2.700px; line-height: 5px; display: block; font-weight: 700; color: #33b4ff; }
    .cct h4 { font-size: 5.200px; line-height: 8.300px; color: #33b4ff; margin-top: 8.400px; letter-spacing: .05px; }
    .cct p { font-size: 3.700px; line-height: 6.500px; color: #66c4ff; margin-top: 5.800px; }
    .cct .stat { margin-top: 10.300px; }
    .img2 { flex: 1; background: #7fcbff; margin-left: .700px; border: 1px solid #bfe5ff; }
    .c-row { display: flex; margin-top: 16.500px; }
    .c-d { width: 88.700px; height: 116.600px; background: #f2faff; flex: none; }
    .cdh { height: 28px; background: #bfe5ff; padding: 8px 8px 0; font-size: 3.200px; line-height: 6px; color: #33b4ff; }
    .cdh b { display: block; white-space: nowrap; } .cdh span { display: flex; align-items: center; gap: 2.500px; }
    .cdi { color: #fff; display: flex; justify-content: center; padding-top: 20px; } .cdi .i { width: 20px; height: 20px; }
    .c-col { margin-left: 14px; width: 89.300px; }
    .c-e { height: 55.600px; background: #f2faff; display: flex; padding: 8.100px 7.700px 0 7.600px; gap: 5.800px; }
    .nm { display: flex; justify-content: flex-start; gap: 6px; align-items: center; height: 9px; }
    .nm b { font-size: 3.600px; color: #4dbdff; white-space: nowrap; } .nm em { font-style: normal; font-size: 2.800px; color: #ccc; white-space: nowrap; }
    .c-e p { font-size: 3.200px; line-height: 6.100px; color: #ccc; margin-top: 4.300px; height: 24.400px; overflow: hidden; }
    .c-f { margin-top: 17.400px; height: 38px; background: #bfe5ff; padding: 5px 6.500px 0; display: flex; flex-direction: column; font-size: 3px; line-height: 6px; color: #666; }
    .c-f b { font-weight: 400; white-space: nowrap; font-size: 3.900px; } .c-f em { font-style: normal; color: #888; font-size: 3.100px; }
    .stars { display: flex; gap: 1.800px; color: #00a8ff; margin-top: 5px; } .stars .i { width: 3px; height: 3px; } .stars .o { color: #7fcbff; }

    /* payment */
    .pt { text-align: center; font-size: 10.400px; line-height: 13px; letter-spacing: .3px; color: #00a8ff; padding-top: 23.500px; }
    .ps { text-align: center; font-size: 3.400px; line-height: 5px; color: #4dbdff; margin-top: 4.600px; }
    .opts { display: flex; justify-content: center; gap: 11px; margin: 10.800px 0 0 -2px; }
    .opt { width: 72.300px; height: 33.200px; background: #fff; display: flex; align-items: center; justify-content: center; color: #33b4ff; }
    .opt.sel { border: 1px solid #d9f0ff; }
    .cardi { width: 19px; height: 10px; }
    .pp { gap: 1.500px; font-size: 7px; font-weight: 700; } .ppi { width: 5px; height: 6.500px; }
    .az { font-size: 8px; font-weight: 700; letter-spacing: -.1px; flex-direction: column; line-height: 7px; }
    .smile { width: 22px; height: 3px; }
    .pcols { display: flex; gap: 28px; padding: 0 0 0 94.700px; margin-top: 17.700px; }
    .pcol { width: 91px; }
    .pcol h5 { font-size: 4.500px; line-height: 6px; color: #999; font-weight: 700; letter-spacing: .15px; white-space: nowrap; }
    .pf { display: flow-root; margin-bottom: 2px; }
    .pf label { display: block; font-size: 2.300px; line-height: 4px; color: #999; margin: 3px 0 2.700px; }
    .pcol h5 + .pf { margin-top: 4.900px; }
    .pi { height: 12.500px; background: #fff; font-size: 3.100px; color: #66c4ff; display: flex; align-items: center; justify-content: space-between; padding: 0 4.500px; border-radius: .5px; white-space: nowrap; }
    .pi .i { width: 3.500px; height: 3.500px; }
    .prow { display: flex; gap: 2.700px; } .pf.half { width: 44.500px; }
    .prow .pf { margin-bottom: 0; } .pcol > .prow { margin-bottom: 2px; }
    .p2 { gap: 3.400px; } .cn { flex: 1; letter-spacing: .3px; }
    .visa { width: 27px; font-size: 7px; font-weight: 700; font-style: italic; color: #00a8ff; justify-content: center; padding: 0; }

    /* flow */
    .fbody { display: grid; grid-template-columns: 191px 160px; padding: 19px 0 0 24.700px; }
    .lrow { display: flex; gap: 11px; height: 25px; }
    .lg { width: 31.300px; display: flex; flex-direction: column; }
    .cl { height: 8.350px; display: flex; align-items: center; font-size: 2.300px; color: #888; }
    .li { flex: 1; height: 0; border-top: 1px solid #7fcbff; }
    .cl.da .li { border-top: 1px dotted #7fcbff; }
    .e { width: 2.200px; height: 2.200px; background: #00a8ff; border-radius: 50%; flex: none; }
    .e0 .e:not(.r) { background: #7fcbff; } .e2 .e { display: none; } .e2 .li { border-color: #bfe5ff; }
    .cl span { width: 13.500px; height: 6px; background: #fff; text-align: center; line-height: 6px; border-radius: 1px; flex: none; }
    .srow { display: flex; gap: 8px; margin-top: 19.200px; align-items: center; }
    .sh { width: 47.300px; height: 47.300px; display: flex; align-items: center; justify-content: center; font-size: 3.200px; font-weight: 700; color: #4dbdff; background: #f2faff; flex: none; }
    .ci { border-radius: 50%; }
    .dia { width: 47.300px; height: 47.300px; flex: none; }
    .dia polygon { fill: #f2faff; } .dia text { font: 700 3.400px "Liberation Sans", Arial, sans-serif; fill: #4dbdff; }
    .prw { display: flex; margin-top: 8.700px; height: 50px; font-size: 3.200px; font-weight: 700; color: #4dbdff; }
    .phn { width: 28px; height: 50px; margin-left: 9.600px; background: #fff; border: 1.500px solid #7fcbff; border-radius: 2px; display: flex; flex-direction: column; align-items: center; justify-content: space-between; padding: 1.500px 0; }
    .phn .sp { width: 5px; height: 1px; background: #7fcbff; } .phn .hb { width: 4px; height: 4px; background: #00a8ff; border-radius: 50%; }
    .call { position: relative; width: 47px; height: 38.700px; margin: 5.300px 0 0 18px; background: #00a8ff; color: #eaf8ff; padding: 4.500px 5.500px; display: flex; flex-direction: column; font-weight: 400; border-radius: 1px; line-height: 5.300px; font-size: 3.100px; white-space: nowrap; }
    .call b { margin-bottom: 4.500px; font-size: 3.200px; }
    .call::after { content: ""; position: absolute; left: 50%; bottom: -3.500px; margin-left: -3px; border: 3px solid transparent; border-top-color: #00a8ff; border-bottom: 0; border-top-width: 3.500px; }
    .modal { position: relative; width: 38.700px; height: 39.300px; margin: 5.300px 0 0 13px; background: #f2faff; border: 1px solid #7fcbff; display: flex; align-items: center; justify-content: center; }
    .modal .i { position: absolute; right: 1.500px; top: 1.500px; width: 3px; height: 3px; color: #00a8ff; }
    .trw { display: flex; margin-top: 23px; }
    .pills { margin-left: 9.600px; width: 22px; display: flex; flex-direction: column; gap: 4.500px; font-size: 2.300px; font-weight: 700; }
    .pills span { height: 6.700px; width: 19.400px; background: #00a8ff; color: #eaf8ff; text-align: center; line-height: 6.700px; border-radius: 1px; }
    .pills .l { width: 22px; } .pills span:last-child { background: #bfe5ff; color: #e6f6ff; }
    .yn { margin-left: 36px; width: 24px; display: grid; grid-template-columns: 10px 10px; gap: 4px; margin-top: 2px; height: 24px; }
    .yn span { width: 10px; height: 10px; border-radius: 50%; display: flex; align-items: center; justify-content: center; font-size: 2.200px; }
    .yn .i { width: 5px; height: 5px; }
    .yn .a { background: #bfe5ff; color: #e6f6ff; } .yn .b { background: #00a8ff; color: #fff; border: .5px solid #7fcbff; }
    .nums { margin-left: 24.600px; display: grid; grid-template-columns: repeat(3, 7.400px); gap: 6.600px; margin-top: 3px; height: 21px; }
    .nums span { width: 7.400px; height: 7.400px; border-radius: 50%; background: #00a8ff; color: #eaf8ff; font-size: 2.400px; line-height: 7.400px; text-align: center; }
    .dsh .lrow { margin-left: 1px; gap: 10.500px; }
    .dsh .li { border-top: 1.500px solid #7fcbff; } .dsh .cl.da .li { border-top: 1.500px dotted #7fcbff; }
    .dsh .e { width: 2.600px; height: 2.600px; background: none; border: .8px solid #7fcbff; }
    .dsh .cl span { border: 1px solid #7fcbff; border-radius: 2px; height: 6.500px; line-height: 4.500px; }
    .dsh .sh { background: none; border: 1px dotted #7fcbff; }
    .dsh .srow { gap: 7.200px; }
    .dsh .dia polygon { fill: none; stroke: #7fcbff; stroke-width: .7; stroke-dasharray: 1 .6; }
    .dsh .phn { background: none; border: 1px dotted #7fcbff; margin-left: 9.300px; }
    .dsh .phn .hb { background: none; border: 1px solid #7fcbff; }
    .dsh .call { background: none; color: #4dbdff; border: 1px dotted #7fcbff; margin-left: 18.600px; }
    .dsh .call::after { border-top-color: #7fcbff; }
    .dsh .modal { background: none; border: 1px dotted #7fcbff; margin-left: 12.300px; }
    .dsh .pills span, .dsh .pills span:last-child { background: #fff; color: #888; border: 1px solid #7fcbff; line-height: 4.700px; border-radius: 2px; }
    .dsh .yn span { background: #fff; color: #4dbdff; border: 1px solid #7fcbff; }
    .dsh .nums span { background: #fff; color: #4dbdff; border: 1px solid #7fcbff; line-height: 5.400px; }

    /* graphic */
    .gfx { display: flex; align-items: center; padding: 22.900px 0 0 10.700px; }
    .g1x { width: 49.600px; height: 50px; } .g2x { width: 51.300px; height: 44.700px; margin-left: 22.700px; }
    .g3x { width: 44px; height: 44.700px; margin-left: 22.700px; } .g4x { width: 44.700px; height: 44.700px; margin-left: 22.700px; }

    /* forms */
    .fm { display: flex; }
    .c1, .c2 { flex: none; }
    .fs { display: flex; flex-direction: column; gap: var(--g); }
    .f { height: var(--h); flex: none; display: flex; align-items: center; background: #fff; font-size: 3.400px; color: #4dbdff; border: 1px solid #e2f4ff; }
    .f.ph .tx { color: #bfe5ff; }
    .tx { flex: 1; display: flex; align-items: center; padding-left: 5px; white-space: nowrap; }
    .car { width: .7px; height: 5px; background: #7fcbff; flex: none; margin: 0 .5px; }
    .f .tr { width: 4px; height: 4px; margin-right: 4.500px; color: #00a8ff; }
    .spin { display: flex; flex-direction: column; margin-right: 3px; color: #4dbdff; } .spin .i { width: 3.500px; height: 3.500px; }
    .note { height: var(--nh); font-size: 3.200px; line-height: 5px; }
    .c3 { flex: none; width: 86.400px; }
    .cg { display: grid; grid-template-columns: 50px 1fr; row-gap: var(--cg); margin-top: var(--cm); }
    .ci2 { display: flex; align-items: center; gap: 3px; font-size: 3.200px; height: 8px; }
    .ci2 .ck { background: #fff; } .ci2 .ra { background: #fff; }
    .ci2.s1 .ck, .ci2.s1 .ra { border: 1.200px solid #7fcbff; }
    .ci2.s2 .ck { background: #fff; border-color: #bfe5ff; }
    .ci2.s2 .ck::after { content: ""; width: 3px; height: 1.500px; border-left: .8px solid #4dbdff; border-bottom: .8px solid #4dbdff; transform: rotate(-45deg); margin-top: -1px; }
    .ci2.s2 .ra { background: radial-gradient(circle, #00a8ff 0 1.300px, #fff 1.700px); }
    .ta { height: 39.200px; padding: 4.500px 5px; font-size: 3.200px; line-height: 6.400px; background: #fff; }
    .ta .car { display: inline-block; vertical-align: middle; }
    .tp { border: 1px solid #d9f0ff; color: #bfe5ff; margin-top: 11.700px; }
    .tf { border: 1.500px solid #bfe5ff; color: #4dbdff; margin-top: 5.700px; }

    .v-n { --h: 13.500px; --g: 5.700px; --nh: 8.800px; --cg: 11.500px; --cm: 2.300px; padding: 52.300px 0 0 60.700px; gap: 34px; }
    .v-n .c1 { width: 99.600px; } .v-n .c2 { width: 27.400px; }
    .v-n .f { border-radius: 7px; border-color: #dff3ff; }
    .v-n .f.fo, .v-n .f.ty, .v-n .f.er { border: 1.500px solid #9fd8ff; }
    .v-n .note { text-align: right; font-size: 2.800px; line-height: 3.500px; }
    .v-n .ck { border-radius: 2px; }
    .v-p { --h: 14px; --g: 5.200px; --nh: 8.400px; --cg: 11.500px; --cm: 3px; padding: 51.700px 0 0 60.300px; gap: 33.300px; }
    .v-p .c1 { width: 100.400px; } .v-p .c2 { width: 28px; }
    .v-p .f.fo, .v-p .f.ty, .v-p .f.er { border: 1.500px solid #cdebff; }
    .v-p .note { padding-top: 2px; }
    .v-p .f .tr { color: #00a8ff; }
    .lb, .ib { align-self: stretch; background: #00a8ff; color: #fff; display: flex; align-items: center; flex: none; border: 1px solid #66c8ff; }
    .lb { width: 27.600px; font-size: 2.700px; padding-left: 5px; white-space: nowrap; }
    .ib { width: 14px; justify-content: center; margin: -1px 0; }
    .lb { margin: -1px 0; }
    .f:has(.lb), .f:has(.ib) { border-left: 0; }
    .v-k { --h: 14px; --g: 5.600px; --nh: 8.400px; --cg: 6px; --cm: -8.400px; padding: 51.700px 0 0 46.700px; gap: 25.400px; }
    .v-k .c1 { width: 128px; } .v-k .c2 { width: 41.300px; }
    .v-k .note { padding-left: 27.600px; }
    .v-k .f.fo, .v-k .f.ty, .v-k .f.er { border-color: #cdebff; }
    .v-k .ci2.s2 .ck { background: #00a8ff; } .v-k .ci2.s2 .ck::after { border-color: #fff; }
    .v-k .ci2.s2 .ra { background: radial-gradient(circle, #fff 0 1.300px, #00a8ff 1.700px); border-color: #00a8ff; }
    .v-k .ci2.s1 .ck, .v-k .ci2.s1 .ra { border-color: #bfe5ff; }
    .v-k .ck, .v-k .ra { border-color: #f2faff; }
    .lbb { display: flex; width: 25.300px; height: 14px; background: #00a8ff; color: #fff; font-size: 2.700px; align-items: center; justify-content: center; margin-top: 11.700px; }
    .lbb.second { margin-top: 11.300px; }
    .v-k .tp, .v-k .tf { margin-top: .3px; border: 1px solid #e2f4ff; }
    .v-s { --h: 14.500px; --g: 5px; --nh: 8.600px; padding: 45.700px 0 0 119px; gap: 33px; }
    .v-s .c1 { width: 100.700px; } .v-s .c2 { width: 28px; }
    .fh { display: flex; flex-direction: column; line-height: 5px; font-size: 3.200px; height: 28.700px; }
    .fh b { margin-bottom: 3px; color: #33b4ff; }
    .v-s .f.fo, .v-s .f.ty, .v-s .f.er { border-color: #cdebff; }
    .v-l { --h: 14px; --g: 5.300px; padding: 50.900px 0 0 119px; gap: 33.700px; }
    .v-l .c1 { width: 100px; } .v-l .c2 { width: 28px; }
    .v-l .fh { height: 28.800px; }
    .v-l .fh b { margin-bottom: 2px; }
    .v-l .f { border: 0; border-bottom: 1px solid #d9f0ff; background: none; padding-bottom: 1px; }
    .v-l .c2 .tx { padding-left: 0; }
    .v-l .f.fo { border-color: #7fcbff; } .v-l .f.ty, .v-l .f.er { border-bottom: 1.500px solid #bfe5ff; }
    .lead { color: #00a8ff; width: 4.500px; height: 4.500px; }
    .v-l .tr { margin-right: .5px; }

    /* controls */
    .oo { display: flex; padding: 50.700px 0 0 88.700px; }
    .o1 { width: 136.600px; flex: none; }
    .pg { position: relative; width: 100px; height: 2.500px; background: #f2faff; margin-top: 11.500px; display: flex; }
    .pg:first-child { margin-top: 10px; }
    .pg i { display: block; position: absolute; left: 0; top: 0; bottom: 0; background: #00a8ff; }
    .a25 { width: 25px; } .a44 { width: 44.300px; } .pg .mid { width: 67.300px; background: #bfe5ff; } .a34 { width: 34px; }
    .pg u { position: absolute; top: .25px; width: 2px; height: 2px; background: #00a8ff; border-radius: 50%; }
    .pg .k { left: 33px; width: 3px; height: 3px; top: -.25px; } .pg .d1 { left: 66px; } .pg .d2 { left: 98px; }
    .o1 .seg { margin-top: 13px; width: 43px; height: 13.700px; color: #eaf8ff; }
    .o-t { margin-top: 8.500px; }
    .pager { display: flex; align-items: center; margin-top: 17.500px; color: #4dbdff; gap: 6.600px; height: 5px; }
    .pager i { width: 1.800px; height: 1.800px; background: #bfe5ff; border-radius: 50%; }
    .pager .i { width: 4px; height: 4px; }
    .o1 .chs { margin-top: 15px; padding-left: 1.300px; }
    .o2 { width: 86.400px; }
    .ttl { display: block; font-size: 3.200px; line-height: 5px; color: #33b4ff; }
    .o2 .tags { margin-top: 3.700px; height: 29.500px; }
    .o2 .tp { margin-top: 7.500px; }

    /* select */
    .qq { display: flex; padding: 47.200px 0 0 83px; }
    .q1 { width: 100.300px; flex: none; }
    .qf { height: 14px; background: #fff; display: flex; align-items: center; justify-content: space-between; padding-left: 5.500px; font-size: 3.300px; color: #4dbdff; }
    .qf.qph { margin-top: 11.500px; color: #bfe5ff; }
    .qb { width: 14px; height: 14px; background: #00a8ff; border: 1px solid #66c8ff; color: #fff; display: flex; align-items: center; justify-content: center; }
    .ql { margin-top: 5.600px; font-size: 3.300px; color: #4dbdff; background: #fff; }
    .ql div { height: 13.800px; display: flex; align-items: center; justify-content: space-between; padding: 0 5.500px; }
    .ql .a { background: #f2faff; }
    .qc { display: flex; align-items: center; margin-top: 13.800px; height: 11.400px; }
    .qt { width: 50.300px; height: 11.400px; background: #fff; display: flex; align-items: center; padding-left: 11px; gap: 5.700px; }
    .qt i { width: 11.200px; height: 11.400px; display: flex; align-items: center; justify-content: center; }
    .qt .mx { background: #bfe5ff; color: #4dbdff; } .qt .bl { background: #00a8ff; color: #fff; }
    .like { margin-left: 13.400px; position: relative; width: 18.300px; height: 11.400px; background: #00a8ff; color: #fff; font-size: 2.700px; display: flex; align-items: center; justify-content: center; }
    .hrt { margin-left: 7px; position: relative; width: 11.300px; height: 11.400px; background: #00a8ff; color: #fff; display: flex; align-items: center; justify-content: center; }
    .like::before, .hrt::before { content: ""; position: absolute; left: -1.500px; top: 4.700px; width: 2px; height: 2px; background: #00a8ff; border-radius: 50%; }
    .qr { display: flex; margin-top: 15.400px; align-items: center; gap: 8.400px; }
    .qr i { width: 8.300px; height: 8.300px; display: flex; align-items: center; justify-content: center; flex: none; }
    .qr .r { border-radius: 50%; } .qr .w { background: #fff; } .qr .m { background: #bfe5ff; } .qr .b { background: #00a8ff; color: #fff; }
    .qr .s .i { width: 5px; height: 5px; }
    .qr .s.b + .r { margin-left: 8px; }
    .qr .r.b { background: radial-gradient(circle, #fff 0 1.400px, #00a8ff 1.800px); }
    .q2 { width: 86.300px; margin-left: 41.700px; display: flex; flex-direction: column; align-items: flex-end; }
    .qa { width: 100%; height: 38.800px; background: #fff; font-size: 3.200px; line-height: 6.400px; padding: 4.500px 5.500px; color: #4dbdff; }
    .qa.qph { color: #bfe5ff; } .qa .car { display: inline-block; vertical-align: middle; }
    .qa.sec { margin-top: 19.600px; }
    .qsub { width: 32.300px; height: 13.600px; background: #00a8ff; color: #fff; font-size: 2.600px; font-weight: 700; display: flex; align-items: center; justify-content: center; }
    .qsub.dis { background: #bfe5ff; color: #eaf8ff; }

    /* checkout */
    .stp { display: flex; justify-content: center; padding-top: 43.500px; height: 74px; }
    .st { width: 40px; display: flex; flex-direction: column; align-items: center; font-size: 2.300px; color: #999; }
    .st i { width: 13px; height: 13px; display: flex; align-items: center; justify-content: center; border-radius: 50%; }
    .st .big { background: #f2faff; }
    .st u { width: 1.800px; height: 1.800px; background: #00a8ff; border-radius: 50%; }
    .st span { margin-top: 3px; line-height: 4px; }
    .rows { margin: 13.800px 0 0 93.700px; width: 228.600px; }
    .rw { height: 29.900px; border: 1px solid #f2faff; margin-bottom: 5px; display: grid; grid-template-columns: 60px 64.400px 27.700px 1fr; column-gap: 11.300px; padding: 0 8px; align-items: center; }
    .rw > div:first-child { margin-right: -12px; }
    .rw h6 { font-size: 5.300px; line-height: 7px; font-weight: 400; color: #888; white-space: nowrap; letter-spacing: .1px; }
    .rw > div > span { font-size: 3.200px; line-height: 5px; display: block; white-space: nowrap; }
    .us { display: flex; justify-content: space-between; align-items: center; font-size: 3.200px; border-bottom: 1px solid #d9f0ff; height: 7px; white-space: nowrap; margin-top: -1px; }
    .us .i { width: 3px; height: 3px; }
    .rw > b { font-size: 4.600px; font-weight: 400; color: #888; text-align: right; white-space: nowrap; }
    .tot { height: 17px; background: #f2faff; display: flex; justify-content: space-between; align-items: center; padding: 0 8.300px; font-size: 5px; color: #888; margin-top: 5.800px; }
    .tot b { font-weight: 400; }
    .nxt { display: flex; width: 32.400px; height: 9.500px; margin: 23.200px auto 0; border: 1px solid #d9f0ff; font-size: 2.500px; align-items: center; justify-content: center; }

    /* m-form */
    .mm { display: flex; padding: 53.200px 0 0 60.300px; }
    .mc1 { width: 177.700px; flex: none; } .mc2 { width: 100.300px; }
    .mm label { display: block; font-size: 3.200px; line-height: 5px; color: #33b4ff; margin-bottom: 1.900px; }
    .mm .l2 { margin-top: 9.500px; } .mm .l3 { margin-top: 12.700px; }
    .mi { width: 100.500px; height: 14px; background: #f2faff; border: 1px solid #d9f0ff; border-radius: 2px; font-size: 3.200px; color: #4dbdff; display: flex; align-items: center; justify-content: space-between; padding: 0 4.500px 0 5.500px; white-space: nowrap; }
    .mi .i { width: 4px; height: 4px; }
    .mp { display: flex; gap: 5.500px; }
    .tip { width: 50.600px; height: 14px; background: #00a8ff; color: #eaf8ff; border-radius: 2px; font-size: 3px; display: flex; align-items: center; justify-content: center; white-space: nowrap; }
    .mlow { display: flex; margin-top: 19.700px; }
    .mt { display: flex; gap: 5.400px; }
    .tb { width: 27px; height: 13.700px; display: flex; padding: 1px; border-radius: 1.500px; }
    .tb i { width: 12px; background: #fff; border-radius: 1px; flex: none; }
    .tb.off { background: #bfe5ff; border: 1px solid #d9f0ff; } .tb.on { background: #00a8ff; border: 1px solid #7fcbff; justify-content: flex-end; }
    .mctl { display: flex; gap: 5.500px; margin-top: 8.300px; }
    .mctl span { width: 14px; height: 14px; background: #f2faff; border: 1px solid #d9f0ff; border-radius: 2px; color: #4dbdff; display: flex; align-items: center; justify-content: center; }
    .mck { margin: 5.200px 0 0 28px; display: grid; grid-template-columns: repeat(3, 8.500px); gap: 8.100px 5.400px; height: 25px; }
    .mck i { width: 8.500px; height: 8.500px; background: #f2faff; border: 1px solid #d9f0ff; display: flex; align-items: center; justify-content: center; }
    .mck .c { border-radius: 2px; } .mck .r { border-radius: 50%; }
    .mck .foc { border-color: #bfe5ff; }
    .mck .on { background: #00a8ff; border-color: #00a8ff; color: #fff; }
    .mck .r.on { background: radial-gradient(circle, #fff 0 1.500px, #00a8ff 2px); }
    .ml { margin-top: 3.200px; width: 100.500px; height: 41.800px; border: 1px solid #d9f0ff; border-radius: 2px; background: #fff; font-size: 3px; color: #4dbdff; }
    .ml div { height: 13.300px; display: flex; align-items: center; padding-left: 5.500px; }
    .ml .a { background: #f2faff; }
    .mb { position: relative; width: 100.300px; height: 5.600px; background: #f2faff; border: 1px solid #d9f0ff; border-radius: 3px; margin-top: 13.900px; }
    .mb.mb2 { margin-top: 16.500px; }
    .mb i { position: absolute; left: -1px; top: -1px; bottom: -1px; background: #00a8ff; border-radius: 3px; }
    .p25 { width: 25px; } .p58 { width: 58.300px; }
    .pct { position: absolute; left: 48px; top: -13px; width: 16.700px; height: 9px; background: #f2faff; border: 1px solid #d9f0ff; border-radius: 2px; font-size: 2.500px; text-align: center; line-height: 7px; }
  `;

  render() {
    return html`
      ${art(408, 146, 1285, 101, "title", "Peña Station NEXT Wireframes: Desktop")}
      ${art(66, 387, 121, 92, "", colors())}
      ${art(66, 503.5, 121, 122.5, "", icons())}
      ${art(66, 648.6, 121, 362, "", typo())}
      ${art(211.4, 386.5, 537.6, 357, "", nav())}
      ${art(211.4, 782, 537.6, 214, "", buttons())}
      ${art(774, 387, 404, 765, "", footers())}
      ${art(1203, 387, 403.7, 336, "", cards())}
      ${art(1203, 757.6, 403.7, 253, "lt", payment())}
      ${art(1632, 387, 403.7, 298, "", flow())}
      ${art(1632, 710.7, 403.7, 124, "", graphic())}
      ${art(1632, 868, 403.7, 252, "lt", form("k", false, thirdK()))}
      ${art(1632, 1169.6, 403.7, 252, "wh", form("l", true, nothing))}
      ${art(1632, 1461, 403.7, 256, "wh", mform())}
      ${art(345, 1036, 403.7, 252.6, "lt", form("n", false, third()))}
      ${art(345, 1328.5, 403.7, 253, "wh", controls())}
      ${art(774, 1195.5, 404, 253, "wh", form("p", false, third()))}
      ${art(774, 1494.5, 404, 253, "lt", selectBoard())}
      ${art(1203, 1043.8, 403.7, 252.7, "wh", checkout())}
      ${art(1203, 1330, 403.7, 253, "wh", form("s", true, nothing))}
    `;
  }
}
